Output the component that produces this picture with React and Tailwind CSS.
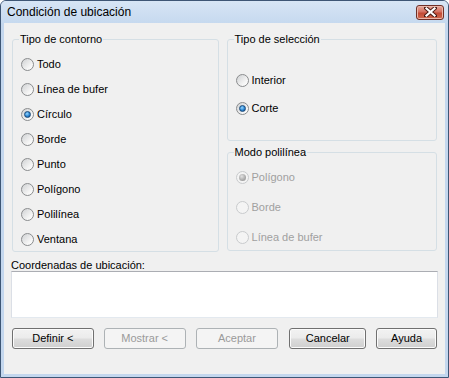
import React from "react";

function Radio({ checked, disabled }) {
  return (
    <span
      className={
        disabled
          ? "flex h-[13px] w-[13px] shrink-0 items-center justify-center rounded-full border border-[#c9cbcd] bg-[#f4f4f4]"
          : "flex h-[13px] w-[13px] shrink-0 items-center justify-center rounded-full border border-[#8a8c8e] bg-[linear-gradient(135deg,#cfd1d3,#f6f6f6_70%,#ffffff)]"
      }
    >
      {checked && (
        <span
          className={
            disabled
              ? "h-[7px] w-[7px] rounded-full bg-[radial-gradient(circle_at_40%_35%,#e2e2e2,#a9a9a9_60%,#8a8a8a)]"
              : "h-[7px] w-[7px] rounded-full border border-[#1b4a7a] bg-[radial-gradient(circle_at_40%_35%,#9ad8ff,#2a86d4_55%,#0e3f78)]"
          }
        />
      )}
    </span>
  );
}

function Option({ label, checked, disabled, h }) {
  return (
    <div className={`flex items-center gap-[3px] ${h}`}>
      <Radio checked={checked} disabled={disabled} />
      <span className={disabled ? "text-[#a0a0a0]" : "text-black"}>{label}</span>
    </div>
  );
}

function Button({ label, disabled, w }) {
  return (
    <div
      className={
        disabled
          ? `flex h-[21px] items-center justify-center rounded-[3px] border border-[#adb2b5] bg-[#f4f4f4] text-[#9a9a9a] ${w}`
          : `flex h-[21px] items-center justify-center rounded-[3px] border border-[#707070] bg-[linear-gradient(#f2f2f2,#ebebeb_48%,#dddddd_52%,#cfcfcf)] text-black shadow-[inset_0_0_0_1px_#fbfbfb] ${w}`
      }
    >
      {label}
    </div>
  );
}

export default function App() {
  return (
    <div className="h-[378px] w-[449px] overflow-hidden bg-white font-['Liberation_Sans',Arial,sans-serif] text-[11px] leading-[13px]">
      <div className="flex h-[378px] w-[449px] flex-col rounded-t-[6px] border border-[#3e5675] bg-[#c4d7ee]">
        {/* title bar */}
        <div className="flex h-[22px] shrink-0 items-center justify-between rounded-t-[5px] bg-[linear-gradient(#d7e5f5,#c6d9ef)] pl-[6px] pr-[4px]">
          <span className="text-[12px] leading-[14px] text-black">Condición de ubicación</span>
          <div className="flex h-[15px] w-[28px] items-center justify-center rounded-[3px] border border-[#6f2f27] bg-[linear-gradient(#e7a99c,#d47060_45%,#c24a35_55%,#cf6a4f)] shadow-[inset_0_0_0_1px_#eab7ab]">
            <svg width="13" height="10" viewBox="0 0 13 10">
              <path d="M2 1 L11 9 M11 1 L2 9" stroke="#4a1b14" strokeWidth="4" strokeLinecap="square" />
              <path d="M2.5 1.5 L10.5 8.5 M10.5 1.5 L2.5 8.5" stroke="#ffffff" strokeWidth="2.2" strokeLinecap="square" />
            </svg>
          </div>
        </div>
        {/* client area */}
        <div className="mx-[3px] mb-[3px] flex flex-1 flex-col bg-[#f0f0f0] px-[8px] pt-[10px]">
          <div className="flex gap-[8px]">
            <fieldset className="h-[219px] w-[207px] rounded-[3px] border border-[#d5dfe5] pb-0 pl-[8px] pr-0 pt-[6px]">
              <legend className="ml-[-2px] px-[1px] leading-[13px]">Tipo de contorno</legend>
              <Option h="h-[25px]" label="Todo" />
              <Option h="h-[25px]" label="Línea de bufer" />
              <Option h="h-[25px]" label="Círculo" checked />
              <Option h="h-[25px]" label="Borde" />
              <Option h="h-[25px]" label="Punto" />
              <Option h="h-[25px]" label="Polígono" />
              <Option h="h-[25px]" label="Polilínea" />
              <Option h="h-[25px]" label="Ventana" />
            </fieldset>
            <div className="flex w-[211px] flex-col">
              <fieldset className="h-[108px] rounded-[3px] border border-[#d5dfe5] pb-0 pl-[8px] pr-0 pt-[20px]">
                <legend className="ml-[-2px] px-[1px] leading-[13px]">Tipo de selección</legend>
                <Option h="h-[28px]" label="Interior" />
                <Option h="h-[28px]" label="Corte" checked />
              </fieldset>
              <fieldset className="mt-[5px] h-[105px] rounded-[3px] border border-[#d5dfe5] pb-0 pl-[8px] pr-0 pt-[3px]">
                <legend className="ml-[-2px] px-[1px] leading-[13px]">Modo polilínea</legend>
                <Option h="h-[30px]" label="Polígono" checked disabled />
                <Option h="h-[30px]" label="Borde" disabled />
                <Option h="h-[30px]" label="Línea de bufer" disabled />
              </fieldset>
            </div>
          </div>
          <div className="ml-[-1px] mt-[7px] leading-[12px]">Coordenadas de ubicación:</div>
          <div className="ml-[-1px] h-[47px] w-[427px] border border-[#dbdfe6] border-t-[#abadb3] border-b-[#e3e9ef] bg-white" />
          <div className="mt-[10px] flex">
            <Button w="w-[82px]" label="Definir <" />
            <Button w="ml-[10px] w-[82px]" label="Mostrar <" disabled />
            <Button w="ml-[10px] w-[83px]" label="Aceptar" disabled />
            <Button w="ml-[11px] w-[77px]" label="Cancelar" />
            <Button w="ml-[10px] w-[61px]" label="Ayuda" />
          </div>
        </div>
      </div>
    </div>
  );
}
